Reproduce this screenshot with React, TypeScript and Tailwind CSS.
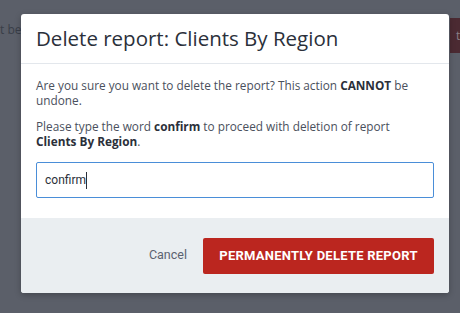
import * as React from "react";

const sans = "font-['Open_Sans','Noto_Sans',sans-serif]";
const roboto = "font-['Roboto','Liberation_Sans',sans-serif]";

export default function App() {
  return (
    <div className="relative w-[460px] h-[313px] overflow-hidden bg-[#5b5f69]">
      {/* page content seen through the backdrop */}
      <div className={`absolute left-0 top-[21px] text-[12px] text-[#393e48] ${sans}`}>t be</div>
      <div className="absolute left-[450px] top-[18px] w-[20px] h-[35px] bg-[#4b2a32] flex items-center pl-[6px]">
        <span className={`text-[12px] text-[#8a7f86] ${sans}`}>t</span>
      </div>

      <div className="relative pt-[14px] pl-[21px]">
        <div className="w-[428px] h-[279px] bg-white rounded-[3px] overflow-hidden flex flex-col shadow-[0_2px_6px_rgba(0,0,0,0.25)]">
          <div className="h-[50px] border-b border-[#e3e7ec] px-[15px] flex items-center">
            <h2 className={`text-[20.5px] text-[#2b303a] ${sans}`}>Delete report: Clients By Region</h2>
          </div>

          <div className={`px-[15px] pt-[14px] text-[11.8px] leading-[15px] text-[#4a505c] ${sans}`}>
            <p>
              Are you sure you want to delete the report? This action{" "}
              <b className="text-[#2b303a]">CANNOT</b> be undone.
            </p>
            <p className="mt-[11px]">
              Please type the word <b className="text-[#2b303a]">confirm</b> to proceed with deletion of report{" "}
              <b className="text-[#2b303a] whitespace-nowrap">Clients By Region</b>.
            </p>
            <div className="mt-[13px] h-[36px] border border-[#4a8ed8] rounded-[2px] flex items-center px-[8px]">
              <span className={`text-[12px] text-[#2b303a] ${roboto}`}>confirm</span>
              <span className="w-px h-[17px] bg-[#2b303a]" />
            </div>
          </div>

          <div className="mt-auto h-[75px] bg-[#eaeef1] flex items-center justify-end gap-[16px] pr-[15px]">
            <button className={`text-[12.5px] text-[#5b6270] ${roboto}`}>Cancel</button>
            <button
              className={`w-[231px] h-[36px] rounded-[2px] bg-[#bb261f] text-white text-[13px] font-bold tracking-[0.25px] ${roboto}`}
            >
              PERMANENTLY DELETE REPORT
            </button>
          </div>
        </div>
      </div>
    </div>
  );
}
